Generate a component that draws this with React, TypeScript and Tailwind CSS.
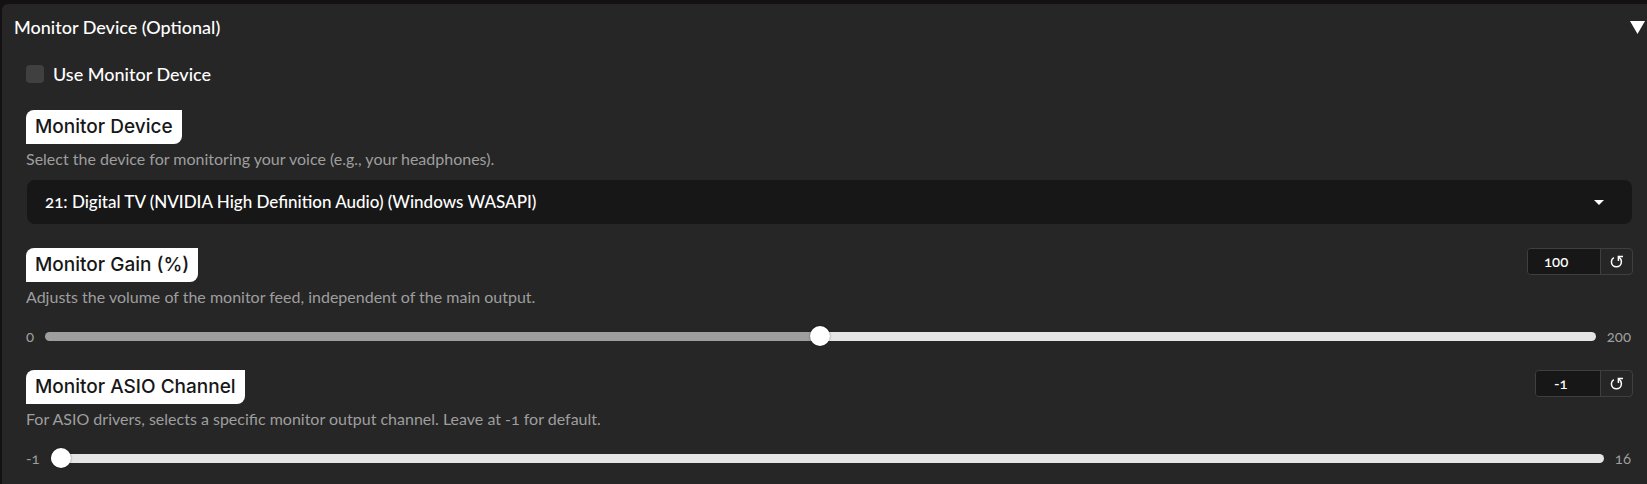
import { useState } from 'react'
import type { ReactNode } from 'react'

interface FieldLabelProps {
  htmlFor: string
  title: string
  hint: string
}

function FieldLabel({ htmlFor, title, hint }: FieldLabelProps) {
  return (
    <div>
      <label
        htmlFor={htmlFor}
        className="flex h-[34px] w-fit items-center rounded-tl-lg rounded-br-lg bg-white px-[9px] font-['Inter',sans-serif] text-[19px] font-medium text-[#171717]"
      >
        {title}
      </label>
      <p className="mt-1 text-base leading-[22px] text-[#9e9e9e]">{hint}</p>
    </div>
  )
}

function ResetIcon() {
  return (
    <svg viewBox="0 0 14 14" className="h-3.5 w-3.5" fill="none" stroke="currentColor" strokeWidth="1.5">
      <path d="M3.8 2.6C2.2 3.6 1.4 5 1.4 6.8C1.4 9.7 3.6 11.8 6.4 11.8S11.4 9.7 11.4 6.8C11.4 5 10.6 3.4 9 2.2" />
      <path d="M13 1.6H8.4V6" />
    </svg>
  )
}

interface SliderFieldProps {
  id: string
  title: string
  hint: string
  min: number
  max: number
  initial: number
  boxClass: string
}

function SliderField({ id, title, hint, min, max, initial, boxClass }: SliderFieldProps) {
  const [value, setValue] = useState(initial)
  const percent = ((value - min) / (max - min)) * 100

  return (
    <div>
      <div className="flex items-start justify-between">
        <FieldLabel htmlFor={id} title={title} hint={hint} />
        <div className="flex h-[27px] overflow-hidden rounded border border-[#3f3f3f]">
          <input
            type="text"
            inputMode="numeric"
            aria-label={`${title} value`}
            value={value}
            onChange={(e) => setValue(Number(e.target.value) || 0)}
            className={`${boxClass} bg-[#171717] text-[15px] font-medium text-white outline-none`}
          />
          <button
            type="button"
            aria-label={`Reset ${title}`}
            onClick={() => setValue(initial)}
            className="flex w-8 items-center justify-center border-l border-[#3f3f3f] text-white"
          >
            <ResetIcon />
          </button>
        </div>
      </div>
      <div className="mt-4 flex h-6 items-center gap-[11px] pr-0.5 text-[15px] text-[#9e9e9e]">
        <span>{min}</span>
        <input
          id={id}
          type="range"
          min={min}
          max={max}
          value={value}
          onChange={(e) => setValue(Number(e.target.value))}
          style={{ backgroundImage: `linear-gradient(to right, #9e9e9e ${percent}%, #e5e5e5 ${percent}%)` }}
          className="h-[9px] min-w-0 flex-1 appearance-none rounded-full [&::-webkit-slider-thumb]:h-5 [&::-webkit-slider-thumb]:w-5 [&::-webkit-slider-thumb]:appearance-none [&::-webkit-slider-thumb]:rounded-full [&::-webkit-slider-thumb]:bg-white [&::-webkit-slider-thumb]:shadow-[0_0_2px_rgba(0,0,0,0.5)]"
        />
        <span>{max}</span>
      </div>
    </div>
  )
}

function Accordion({ title, children }: { title: string; children: ReactNode }) {
  const [open, setOpen] = useState(true)

  return (
    <section className="ml-0.5 flex-1 rounded-tl-md bg-[#262626]">
      <button
        type="button"
        aria-expanded={open}
        onClick={() => setOpen(!open)}
        className="flex h-[46px] w-full items-center justify-between pr-0.5 pl-3 text-lg font-medium text-white"
      >
        <span>{title}</span>
        <svg viewBox="0 0 15 13" className="h-[13px] w-[15px]" fill="currentColor">
          <path d="M0 0H15L7.5 13Z" />
        </svg>
      </button>
      {open && <div className="flex flex-col pr-3.5 pl-6">{children}</div>}
    </section>
  )
}

export default function App() {
  const [enabled, setEnabled] = useState(false)

  return (
    <main className="flex min-h-screen flex-col bg-[#131112] pt-1 font-['Lato',sans-serif] oldstyle-nums">
      <Accordion title="Monitor Device (Optional)">
        <label className="mt-2.5 flex h-7 w-fit items-center gap-[9px] text-lg font-medium text-white">
          <input
            type="checkbox"
            checked={enabled}
            onChange={(e) => setEnabled(e.target.checked)}
            className="h-[18px] w-[18px] appearance-none rounded bg-[#404040] checked:bg-[#9e9e9e]"
          />
          Use Monitor Device
        </label>

        <div className="mt-[22px]">
          <FieldLabel
            htmlFor="monitor-device"
            title="Monitor Device"
            hint="Select the device for monitoring your voice (e.g., your headphones)."
          />
          <div className="relative mx-px mt-2.5">
            <select
              id="monitor-device"
              className="h-11 w-full appearance-none rounded-lg bg-[#171717] px-[18px] text-[17px] font-medium text-white outline-none"
            >
              <option>21: Digital TV (NVIDIA High Definition Audio) (Windows WASAPI)</option>
            </select>
            <svg
              viewBox="0 0 10 5"
              className="pointer-events-none absolute top-5 right-7 h-[5px] w-2.5 text-white"
              fill="currentColor"
            >
              <path d="M0 0H10L5 5Z" />
            </svg>
          </div>
        </div>

        <div className="mt-6 flex flex-col gap-[22px]">
          <SliderField
            id="monitor-gain"
            title="Monitor Gain (%)"
            hint="Adjusts the volume of the monitor feed, independent of the main output."
            min={0}
            max={200}
            initial={100}
            boxClass="w-[72px] pl-4"
          />
          <SliderField
            id="monitor-asio"
            title="Monitor ASIO Channel"
            hint="For ASIO drivers, selects a specific monitor output channel. Leave at -1 for default."
            min={-1}
            max={16}
            initial={-1}
            boxClass="w-16 pl-[18px]"
          />
        </div>
      </Accordion>
    </main>
  )
}
